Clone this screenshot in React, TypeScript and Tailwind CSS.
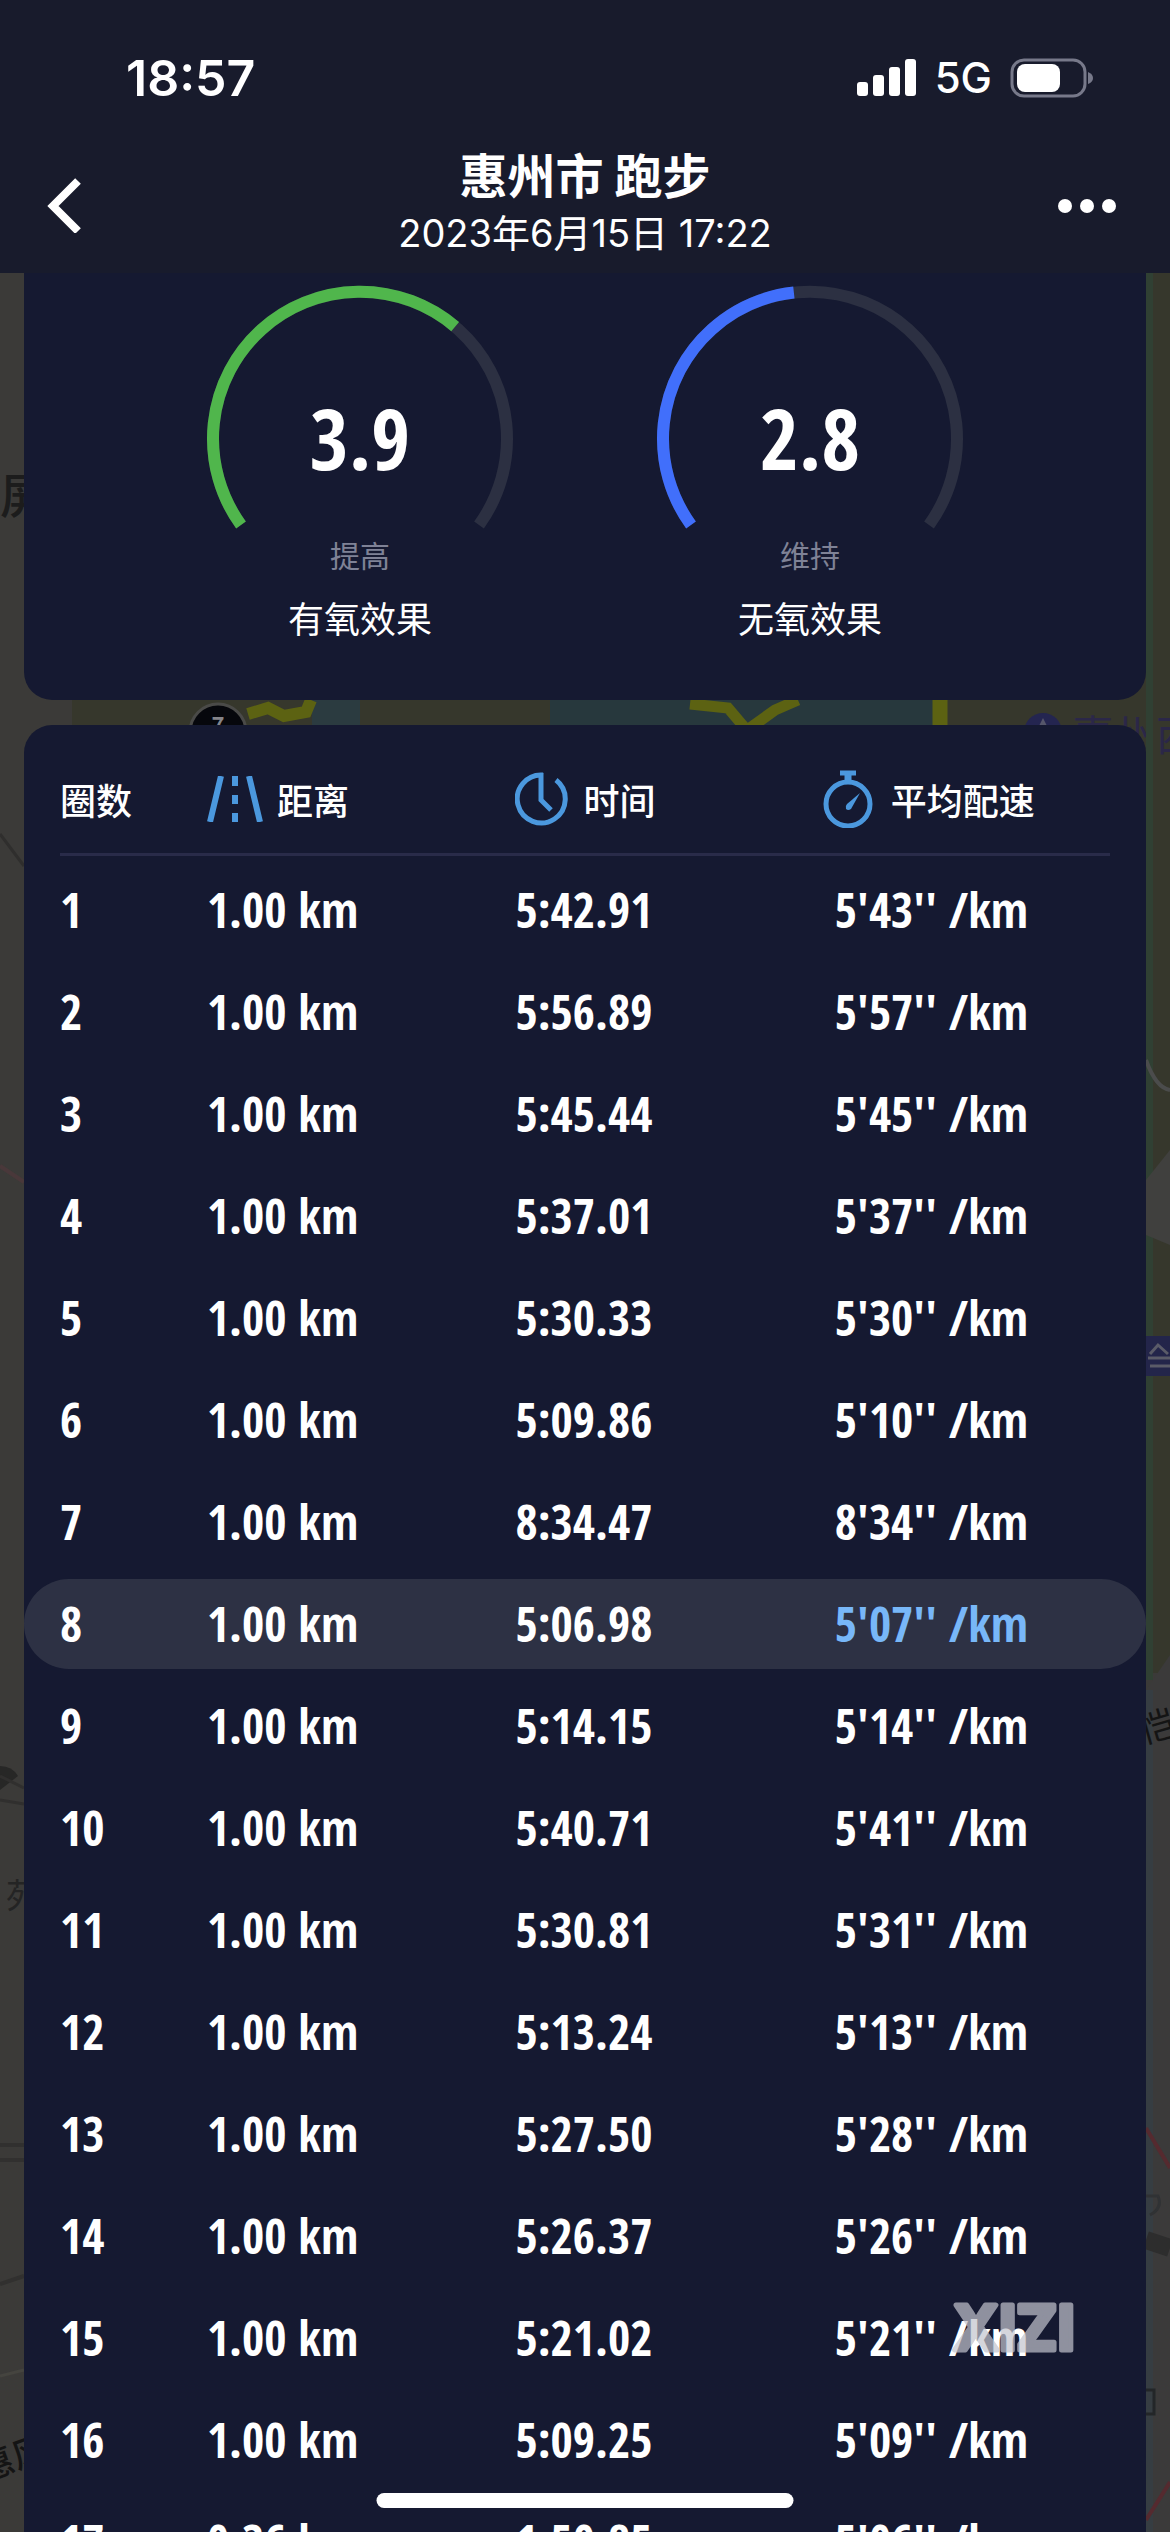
type Lap = { distance: string; time: string; pace: string };

const laps: Lap[] = [
  { distance: "1.00 km", time: "5:42.91", pace: "5'43'' /km" },
  { distance: "1.00 km", time: "5:56.89", pace: "5'57'' /km" },
  { distance: "1.00 km", time: "5:45.44", pace: "5'45'' /km" },
  { distance: "1.00 km", time: "5:37.01", pace: "5'37'' /km" },
  { distance: "1.00 km", time: "5:30.33", pace: "5'30'' /km" },
  { distance: "1.00 km", time: "5:09.86", pace: "5'10'' /km" },
  { distance: "1.00 km", time: "8:34.47", pace: "8'34'' /km" },
  { distance: "1.00 km", time: "5:06.98", pace: "5'07'' /km" },
  { distance: "1.00 km", time: "5:14.15", pace: "5'14'' /km" },
  { distance: "1.00 km", time: "5:40.71", pace: "5'41'' /km" },
  { distance: "1.00 km", time: "5:30.81", pace: "5'31'' /km" },
  { distance: "1.00 km", time: "5:13.24", pace: "5'13'' /km" },
  { distance: "1.00 km", time: "5:27.50", pace: "5'28'' /km" },
  { distance: "1.00 km", time: "5:26.37", pace: "5'26'' /km" },
  { distance: "1.00 km", time: "5:21.02", pace: "5'21'' /km" },
  { distance: "1.00 km", time: "5:09.25", pace: "5'09'' /km" },
  { distance: "0.36 km", time: "1:50.85", pace: "5'06'' /km" },
];

const BEST_LAP = 7;

function MapBackground() {
  return (
    <svg
      className="absolute inset-0 h-full w-full"
      viewBox="0 0 1170 2532"
      preserveAspectRatio="xMidYMin slice"
      fontFamily="'Noto Sans CJK SC', sans-serif"
      aria-hidden="true"
    >
      <rect width="1170" height="2532" fill="#3b3a38" />
      <rect x="72" y="273" width="1098" height="1400" fill="#36372c" />
      <rect x="312" y="690" width="48" height="50" fill="#2b3b40" />
      <rect x="550" y="690" width="384" height="50" fill="#27383d" />
      <path d="M248 714 L268 708 L284 716 L306 712 L311 700" stroke="#5c6212" strokeWidth="12" fill="none" />
      <path d="M690 704 L728 708 L745 728 M750 728 L775 710 L798 700" stroke="#5c6212" strokeWidth="11" fill="none" />
      <path d="M940 700 V728" stroke="#5c6212" strokeWidth="15" />
      <path d="M872 729 H886" stroke="#5c6212" strokeWidth="5" />
      <circle cx="218" cy="732" r="28" fill="#06070c" stroke="#4a4a48" strokeWidth="3" />
      <text x="218" y="734" fontSize="22" fontWeight="700" fill="#85858a" textAnchor="middle">7</text>
      <circle cx="1043" cy="732" r="19" fill="#242550" />
      <path d="M1043 718 L1048 728 H1038 Z" fill="#55566a" />
      <text x="1072" y="751" fontSize="42" fill="#2b2748">惠州西</text>

      <path d="M1146 273 H1153 V1680 H1146 Z" fill="#304033" />
      <path d="M1146 1060 Q1156 1088 1170 1090" stroke="#4b4c4c" strokeWidth="4" fill="none" />
      <path d="M1146 1180 L1170 1150 V1245 L1146 1235 Z" fill="#40403e" />
      <rect x="1146" y="1336" width="24" height="40" fill="#23254a" />
      <path d="M1150 1354 L1158 1345 L1168 1354 M1148 1358 H1170 M1150 1366 H1170" stroke="#5a5b68" strokeWidth="3" fill="none" />
      <path d="M1146 1690 L1170 1655 V2532 H1146 Z" fill="#3b3a3a" />
      <rect x="1146" y="1690" width="7" height="842" fill="#363d42" />
      <text x="1143" y="1744" fontSize="36" fill="#141414" transform="rotate(-16 1143 1744)">恺</text>
      <path d="M1146 2128 L1170 2168 M1146 2520 L1170 2482" stroke="#552a2f" strokeWidth="4" />
      <path d="M1146 2196 H1158 Q1163 2208 1150 2215" stroke="#303234" strokeWidth="3" fill="none" />
      <path d="M1146 2240 L1170 2248" stroke="#2d2d2d" strokeWidth="18" />
      <rect x="1134" y="2390" width="20" height="24" fill="none" stroke="#232628" strokeWidth="3" />

      <text x="0" y="513" fontSize="48" fontWeight="500" fill="#1c1c1c">屏</text>
      <path d="M0 834 L24 866" stroke="#2f2e2d" strokeWidth="3" />
      <path d="M0 1166 L24 1182" stroke="#49383a" strokeWidth="4" />
      <path d="M0 1766 Q12 1766 18 1776 L0 1790 Z" fill="#272726" />
      <path d="M0 1776 L24 1788 M0 1800 L24 1804" stroke="#302f2e" strokeWidth="3" />
      <text x="6" y="1908" fontSize="34" fill="#242424">苑</text>
      <path d="M0 2145 H24 M0 2160 H24 M0 2284 L24 2276" stroke="#31302f" strokeWidth="4" />
      <path d="M0 2376 L24 2370" stroke="#45443f" strokeWidth="3" />
      <text x="-16" y="2476" fontSize="34" fontWeight="500" fill="#141414" transform="rotate(-20 0 2476)">惠风</text>
    </svg>
  );
}

function StatusBar() {
  return (
    <div className="flex h-[143px] items-center justify-between pt-[13px] pr-[77px] pl-[126px]">
      <span className="font-['Inter',sans-serif] text-[50px] font-semibold">18:57</span>
      <div className="flex items-center gap-[18px]">
        <svg width="60" height="38" viewBox="0 0 60 38" fill="white" aria-hidden="true">
          <rect x="0" y="23" width="11" height="14" rx="3" />
          <rect x="16" y="16" width="11" height="21" rx="3" />
          <rect x="32" y="8" width="11" height="29" rx="3" />
          <rect x="48" y="0" width="11" height="37" rx="3" />
        </svg>
        <span className="font-['Inter',sans-serif] text-[42px] leading-none font-medium">5G</span>
        <svg width="83" height="40" viewBox="0 0 83 40" aria-hidden="true">
          <rect x="2" y="2" width="73" height="36" rx="12" fill="none" stroke="#77798a" strokeWidth="3" />
          <rect x="7" y="6" width="43" height="28" rx="8" fill="white" />
          <path d="M78 14 Q83 16 83 20 Q83 24 78 26 Z" fill="#77798a" />
        </svg>
      </div>
    </div>
  );
}

function Header() {
  return (
    <header className="relative shrink-0 bg-[#181b2c] pb-[10px]">
      <StatusBar />
      <div className="flex h-[120px] items-center justify-between px-11">
        <button type="button" aria-label="返回" className="w-20">
          <svg width="42" height="60" viewBox="0 0 42 60" fill="none" stroke="white" strokeWidth="8">
            <path d="M34 8 L9 33 L34 58" />
          </svg>
        </button>
        <div className="text-center">
          <h1 className="text-[48px] leading-[60px] font-bold">惠州市 跑步</h1>
          <p className="font-['Inter','Noto_Sans_CJK_SC',sans-serif] text-[38px] leading-[60px]">
            2023年6月15日 17:22
          </p>
        </div>
        <button type="button" aria-label="更多" className="flex w-20 justify-end">
          <svg width="70" height="20" viewBox="0 0 70 20" fill="white">
            <circle cx="9" cy="13" r="7" />
            <circle cx="31" cy="13" r="7" />
            <circle cx="53" cy="13" r="7" />
          </svg>
        </button>
      </div>
    </header>
  );
}

type GaugeProps = { value: string; percent: number; color: string; level: string; label: string };

const ARC = "M34 239 A147 147 0 1 1 272 239";

function Gauge({ value, percent, color, level, label }: GaugeProps) {
  return (
    <div className="flex flex-1 flex-col items-center">
      <svg width="306" height="242" viewBox="0 0 306 242" overflow="visible" fill="none" strokeWidth="12">
        <path d={ARC} stroke="#2c3042" />
        <path d={ARC} stroke={color} pathLength="100" strokeDasharray={`${percent} 100`} />
        <text
          x="153"
          y="184"
          textAnchor="middle"
          fill="white"
          strokeWidth="0"
          className="font-['Open_Sans_Condensed',sans-serif] text-[84px] font-bold"
        >
          {value}
        </text>
      </svg>
      <p className="text-[30px] leading-[52px] text-[#7f8296]">{level}</p>
      <p className="text-[36px] leading-[74px]">{label}</p>
    </div>
  );
}

function RoadIcon() {
  return (
    <svg width="56" height="46" viewBox="0 0 56 46" stroke="#4b98de" strokeWidth="6" fill="none">
      <path d="M14 0 L3 46 M42 0 L53 46" />
      <path d="M28 0 V10 M28 19 V28 M28 37 V46" />
    </svg>
  );
}

function ClockIcon() {
  return (
    <svg width="54" height="54" viewBox="0 0 54 54" stroke="#4b98de" strokeWidth="5" fill="none">
      <path d="M28 3 A24 24 0 1 0 41 8" />
      <path d="M26 1 V28 L36 38" />
    </svg>
  );
}

function StopwatchIcon() {
  return (
    <svg width="50" height="58" viewBox="0 0 50 58" stroke="#4b98de" fill="none">
      <circle cx="25" cy="34" r="22" strokeWidth="5" />
      <path d="M17 3 H33" strokeWidth="5" />
      <path d="M25 3 V12" strokeWidth="7" />
      <path d="M37 23 L28 39 Q25 41 23 39 Q22 36 24 34 Z" fill="#4b98de" stroke="none" />
    </svg>
  );
}

function LapTable() {
  return (
    <table className="w-full table-fixed text-left">
      <colgroup>
        <col className="w-[16.3%]" />
        <col className="w-[27.5%]" />
        <col className="w-[27.4%]" />
        <col />
      </colgroup>
      <thead className="text-[36px]">
        <tr className="h-[128px]">
          <th className="pt-5 pl-9 font-medium">圈数</th>
          <th className="pt-5 font-medium">
            <span className="flex items-center gap-[14px]">
              <RoadIcon />
              距离
            </span>
          </th>
          <th className="pt-5 font-medium">
            <span className="flex items-center gap-[14px]">
              <ClockIcon />
              时间
            </span>
          </th>
          <th className="pt-5 font-medium">
            <span className="flex items-center gap-[18px]">
              <StopwatchIcon />
              平均配速
            </span>
          </th>
        </tr>
        <tr>
          <td colSpan={4} className="px-9 pb-[3px]">
            <div className="h-[3px] bg-[#292b49]"></div>
          </td>
        </tr>
      </thead>
      <tbody className="font-['Open_Sans_Condensed',sans-serif] text-[48px] leading-[90px] font-bold">
        {laps.map((lap, i) => {
          const best = i === BEST_LAP;
          const bg = best ? "bg-[#2d3144]" : "";
          return (
            <tr key={i}>
              <td className="py-[6px]">
                <div className={`rounded-l-full pl-9 ${bg}`}>{i + 1}</div>
              </td>
              <td className="py-[6px]">
                <div className={bg}>{lap.distance}</div>
              </td>
              <td className="py-[6px]">
                <div className={bg}>{lap.time}</div>
              </td>
              <td className="py-[6px]">
                <div className={`rounded-r-full pl-3 ${bg} ${best ? "text-[#78b7f8]" : ""}`}>{lap.pace}</div>
              </td>
            </tr>
          );
        })}
      </tbody>
    </table>
  );
}

export default function App() {
  return (
    <div
      lang="zh-CN"
      className="relative flex h-screen flex-col overflow-hidden font-['Noto_Sans_CJK_SC',sans-serif] text-white"
    >
      <MapBackground />
      <Header />
      <main className="relative flex min-h-0 flex-1 flex-col gap-[25px] overflow-hidden px-6">
        <section className="flex shrink-0 rounded-b-[28px] bg-[#151931] px-[111px] pt-[13px] pb-[46px]">
          <Gauge value="3.9" percent={66} color="#50b64c" level="提高" label="有氧效果" />
          <Gauge value="2.8" percent={47.5} color="#416ffb" level="维持" label="无氧效果" />
        </section>
        <section className="shrink-0 rounded-t-[28px] bg-[#151931]">
          <LapTable />
        </section>
      </main>

      <svg className="absolute right-[82px] bottom-[172px] opacity-70" width="148" height="64" viewBox="0 0 148 64">
        <text
          x="74"
          y="54"
          textAnchor="middle"
          fill="#c3c4ce"
          stroke="#c3c4ce"
          strokeWidth="5"
          strokeLinejoin="round"
          className="font-['Inter',sans-serif] text-[62px] font-bold"
        >
          XIZI
        </text>
      </svg>
      <div className="absolute bottom-6 left-1/2 h-[15px] w-[417px] -translate-x-1/2 rounded-full bg-white"></div>
    </div>
  );
}
